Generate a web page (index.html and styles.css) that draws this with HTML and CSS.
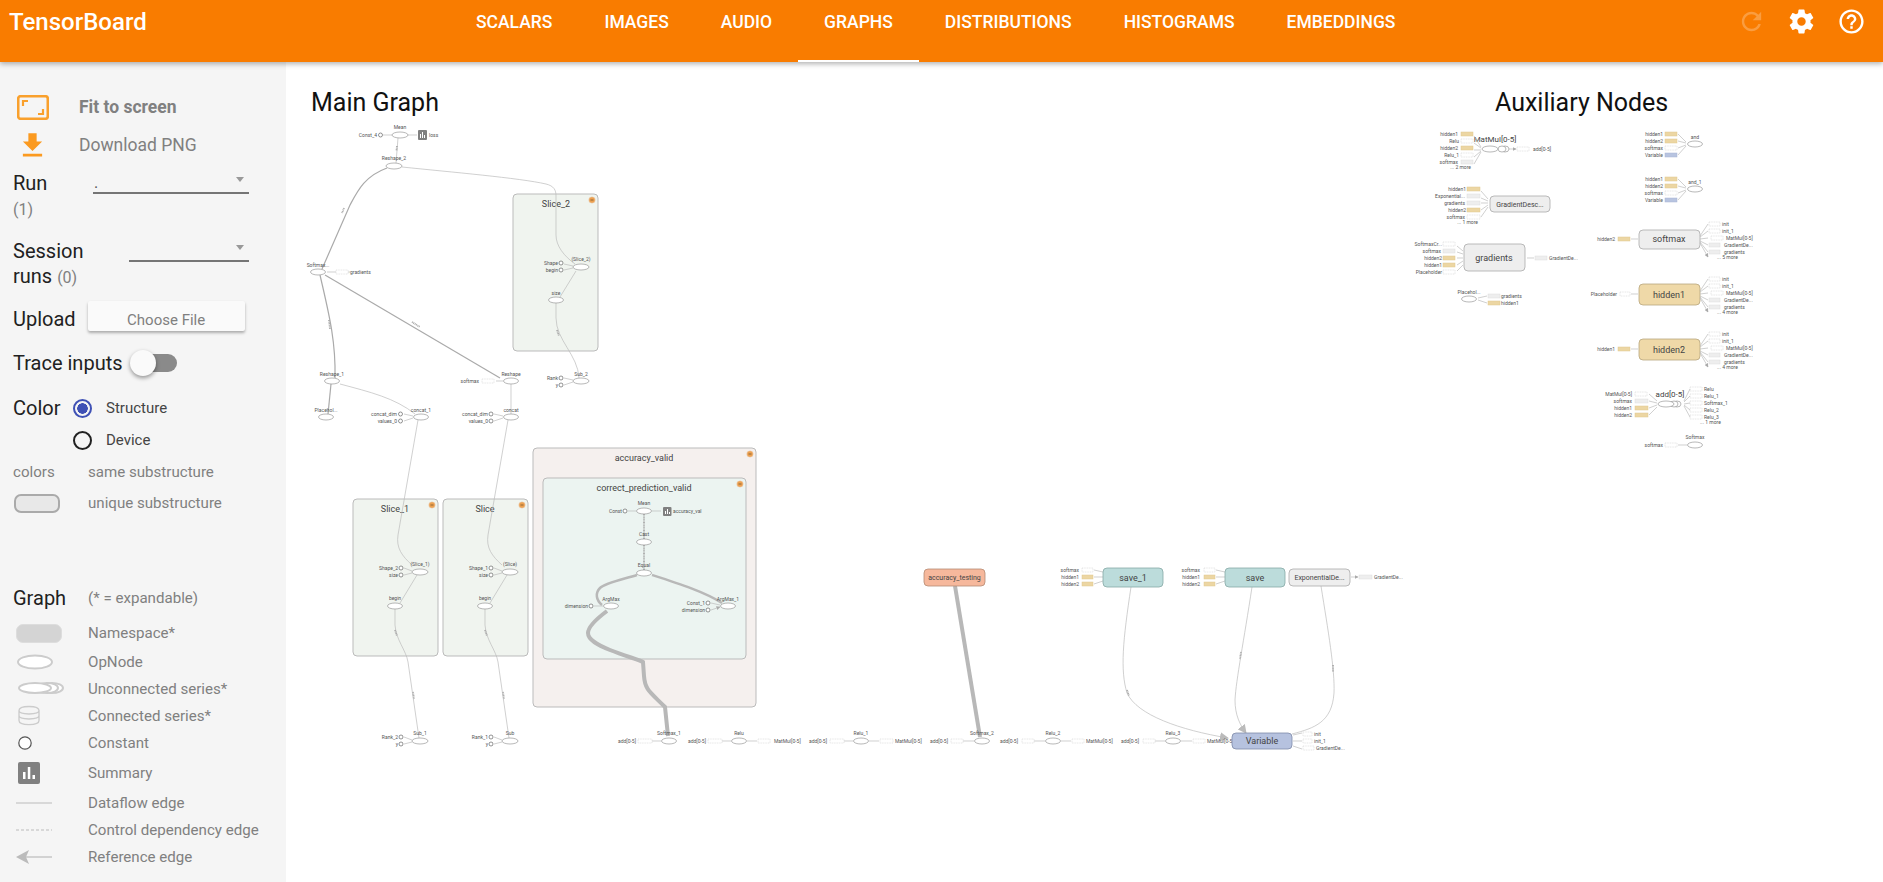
FILE: index.html
```html
<!DOCTYPE html>
<html lang="en">
<head>
<meta charset="utf-8">
<title>TensorBoard</title>
<link rel="stylesheet" href="styles.css">
</head>
<body>
<header class="topbar">
  <div class="brand">TensorBoard</div>
  <nav class="tabs">
    <a class="tab">Scalars</a>
    <a class="tab">Images</a>
    <a class="tab">Audio</a>
    <a class="tab tab-active">Graphs</a>
    <a class="tab">Distributions</a>
    <a class="tab">Histograms</a>
    <a class="tab">Embeddings</a>
  </nav>
  <div class="actions">
    <svg class="act act-off" viewBox="0 0 24 24"><path d="M17.65 6.35C16.2 4.9 14.21 4 12 4c-4.42 0-7.99 3.58-7.99 8s3.57 8 7.99 8c3.73 0 6.84-2.55 7.73-6h-2.08c-.82 2.33-3.04 4-5.65 4-3.31 0-6-2.69-6-6s2.69-6 6-6c1.66 0 3.14.69 4.22 1.78L13 11h7V4l-2.35 2.35z"/></svg>
    <svg class="act" viewBox="0 0 24 24"><path d="M19.43 12.98c.04-.32.07-.64.07-.98s-.03-.66-.07-.98l2.11-1.65c.19-.15.24-.42.12-.64l-2-3.46c-.12-.22-.39-.3-.61-.22l-2.49 1c-.52-.4-1.08-.73-1.69-.98l-.38-2.65C14.46 2.18 14.25 2 14 2h-4c-.25 0-.46.18-.49.42l-.38 2.65c-.61.25-1.17.59-1.69.98l-2.49-1c-.23-.09-.49 0-.61.22l-2 3.46c-.13.22-.07.49.12.64l2.11 1.65c-.04.32-.07.65-.07.98s.03.66.07.98l-2.11 1.65c-.19.15-.24.42-.12.64l2 3.46c.12.22.39.3.61.22l2.49-1c.52.4 1.08.73 1.69.98l.38 2.65c.03.24.24.42.49.42h4c.25 0 .46-.18.49-.42l.38-2.65c.61-.25 1.17-.59 1.69-.98l2.49 1c.23.09.49 0 .61-.22l2-3.46c.12-.22.07-.49-.12-.64l-2.11-1.65zM12 15.5c-1.93 0-3.5-1.57-3.5-3.5s1.57-3.5 3.5-3.5 3.5 1.57 3.5 3.5-1.57 3.5-3.5 3.5z"/></svg>
    <svg class="act" viewBox="0 0 24 24"><path d="M11 18h2v-2h-2v2zm1-16C6.48 2 2 6.48 2 12s4.48 10 10 10 10-4.48 10-10S17.52 2 12 2zm0 18c-4.41 0-8-3.59-8-8s3.59-8 8-8 8 3.59 8 8-3.59 8-8 8zm0-14c-2.21 0-4 1.79-4 4h2c0-1.1.9-2 2-2s2 .9 2 2c0 2-3 1.75-3 5h2c0-2.25 3-2.5 3-5 0-2.21-1.79-4-4-4z"/></svg>
  </div>
</header>
<div class="body">
  <aside class="side">
    <div class="cmd cmd-fit">
      <svg class="cmd-ic" viewBox="0 0 32 25"><rect x="1.2" y="1.2" width="29.6" height="22.6" rx="2.5"/><path class="cmd-c" d="M6 11V6h5M26 14v5h-5"/></svg>
      <span class="cmd-b">Fit to screen</span>
    </div>
    <div class="cmd cmd-dl">
      <svg class="cmd-ic2" viewBox="0 0 24 24"><path d="M19 9h-4V3H9v6H5l7 7 7-7zM5 18v2h14v-2H5z"/></svg>
      <span>Download PNG</span>
    </div>
    <div class="ctl ctl-run">
      <div class="lab">Run<br><span class="cnt">(1)</span></div>
      <div class="sel sel-run"><span class="sel-v">.</span><i class="caret"></i></div>
    </div>
    <div class="ctl ctl-ses">
      <div class="lab">Session<br>runs <span class="cnt">(0)</span></div>
      <div class="sel sel-ses"><i class="caret"></i></div>
    </div>
    <div class="ctl ctl-up">
      <div class="lab">Upload</div>
      <div class="btn">Choose File</div>
    </div>
    <div class="ctl ctl-tr">
      <div class="lab">Trace inputs</div>
      <div class="tog"><i class="tog-th"></i></div>
    </div>
    <div class="ctl ctl-col">
      <div class="lab lab-col">Color</div>
      <div class="rad-list">
        <div class="rad"><i class="rad-i rad-on"></i><span>Structure</span></div>
        <div class="rad"><i class="rad-i"></i><span>Device</span></div>
      </div>
    </div>
    <div class="lg lg-colors">
      <div class="lg-row lg-r1"><span class="lg-k">colors</span><span>same substructure</span></div>
      <div class="lg-row lg-r2"><span class="lg-k"><i class="sw-uniq"></i></span><span>unique substructure</span></div>
    </div>
    <div class="lg lg-graph">
      <div class="lg-row2 lg-h"><span class="lg-k2 lg-title">Graph</span><span>(* = expandable)</span></div>
      <div class="lg-row2 h-ns"><span class="lg-k2"><i class="sw-ns"></i></span><span>Namespace*</span></div>
      <div class="lg-row2"><span class="lg-k2"><svg class="sw" viewBox="0 0 50 20"><ellipse class="sw-op" cx="21" cy="10" rx="17" ry="6.5"/></svg></span><span>OpNode</span></div>
      <div class="lg-row2"><span class="lg-k2"><svg class="sw" viewBox="0 0 50 20"><ellipse class="sw-op" cx="38" cy="9" rx="11" ry="5"/><ellipse class="sw-op" cx="33" cy="9" rx="11" ry="5"/><ellipse class="sw-op" cx="21" cy="9" rx="16" ry="5"/></svg></span><span>Unconnected series*</span></div>
      <div class="lg-row2"><span class="lg-k2"><svg class="sw" viewBox="0 0 50 22"><path class="sw-st" d="M3 5c0-6 22-6 22 0v11c0 6-22 6-22 0zM3 5c0 5 22 5 22 0M3 10.500c0 5 22 5 22 0"/></svg></span><span>Connected series*</span></div>
      <div class="lg-row2"><span class="lg-k2"><svg class="sw" viewBox="0 0 50 20"><circle class="sw-cn" cx="11" cy="10" r="6.200"/></svg></span><span>Constant</span></div>
      <div class="lg-row2 h-sum"><span class="lg-k2"><svg class="sw-s" viewBox="0 0 22 22"><rect class="sw-sb" width="22" height="22" rx="2"/><path class="sw-sw" d="M5 10h2.500v7H5zM9.800 5h2.500v12H9.800zM14.500 13H17v4h-2.500z"/></svg></span><span>Summary</span></div>
      <div class="lg-row2"><span class="lg-k2"><svg class="sw" viewBox="0 0 50 20"><path class="sw-l" d="M2 10h36"/></svg></span><span>Dataflow edge</span></div>
      <div class="lg-row2"><span class="lg-k2"><svg class="sw" viewBox="0 0 50 20"><path class="sw-l sw-d" d="M2 10h36"/></svg></span><span>Control dependency edge</span></div>
      <div class="lg-row2"><span class="lg-k2"><svg class="sw" viewBox="0 0 50 20"><path class="sw-l" d="M12 10h26"/><path class="sw-ar" d="M2 10l13-7-3 7 3 7z"/></svg></span><span>Reference edge</span></div>
    </div>
  </aside>
  <main class="board">
    <svg class="graph" viewBox="286 62 1597 820">
      <defs>
        <marker id="a" markerUnits="userSpaceOnUse" markerWidth="4" markerHeight="4" refX="3.500" refY="2" orient="auto"><path class="ah" d="M0 0l4 2-4 2z"/></marker>
        <marker id="ab" markerUnits="userSpaceOnUse" markerWidth="9" markerHeight="9" refX="8" refY="4.500" orient="auto"><path class="ahb" d="M0 0l9 4.500-9 4.500z"/></marker>
        <g id="fan">
          <path class="e" marker-end="url(#a)" d="M0-3L8-15M0-2L8-8M0 0L8-1M0 2L8 6M0 3L8 13M0 4L8 18"/>
          <rect class="s-d" x="9" y="-17" width="11" height="4"/>
          <rect class="s-d" x="9" y="-10" width="11" height="4"/>
          <rect class="s-d" x="11" y="-3" width="12" height="4"/>
          <rect class="s-g" x="9" y="4" width="11" height="4"/>
          <rect class="s-g" x="9" y="11" width="11" height="4"/>
          <text class="t" x="22" y="-13.500">init</text>
          <text class="t" x="22" y="-6.500">init_1</text>
          <text class="t" x="26" y="0.500">MatMul[0-5]</text>
          <text class="t" x="24" y="7.500">GradientDe...</text>
          <text class="t" x="24" y="14.500">gradients</text>
        </g>
      </defs>

      <text class="h1" x="311" y="111">Main Graph</text>
      <text class="h1" x="1495" y="111">Auxiliary Nodes</text>

      <!-- groups -->
      <rect class="grp" x="513" y="194" width="85" height="157" rx="4"/>
      <rect class="grp" x="353" y="499" width="85" height="157" rx="4"/>
      <rect class="grp" x="443" y="499" width="85" height="157" rx="4"/>
      <rect class="grp-o" x="533" y="448" width="223" height="259" rx="4"/>
      <rect class="grp-i" x="543" y="478" width="203" height="181" rx="4"/>
      <g class="tm tg">
        <text x="556" y="207">Slice_2</text>
        <text x="395" y="512">Slice_1</text>
        <text x="485" y="512">Slice</text>
        <text x="644" y="461">accuracy_valid</text>
        <text x="644" y="491">correct_prediction_valid</text>
      </g>
      <g class="mini">
        <circle cx="592" cy="200" r="3.300"/><circle cx="432" cy="505" r="3.300"/><circle cx="522" cy="505" r="3.300"/><circle cx="750" cy="454" r="3.300"/><circle cx="740" cy="484" r="3.300"/>
      </g>
      <path class="mini-l" d="M590.500 200h3M430.500 505h3M520.500 505h3M748.500 454h3M738.500 484h3"/>

      <!-- main edges -->
      <path class="e" d="M402 167C450 172 520 178 546 184C554 186 556 190 556 196V235C556 246 564 256 575 264"/>
      <path class="e2" d="M387 168C365 176 358 190 350 205L322 269"/>
      <path class="e2" d="M320 275C328 310 336 340 335 378"/>
      <path class="e2" d="M325 275L500 378"/>
      <path class="e" d="M398 138L396 163"/>
      <path class="e2" d="M331 384L328 414"/>
      <path class="e" d="M340 384C370 392 395 398 415 414"/>
      <path class="e" d="M511 384V414"/>
      <path class="e" d="M576 271L560 297"/>
      <path class="e" d="M556 303V318C556 340 578 355 579 378"/>
      <path class="e" d="M418 420L398 535C396 548 402 556 412 565"/>
      <path class="e" d="M508 420L488 535C486 548 492 556 502 565"/>
      <path class="e" d="M417 575L400 603"/>
      <path class="e" d="M507 575L490 603"/>
      <path class="e" d="M395 609V625C396 640 406 650 408 662L419 738"/>
      <path class="e" d="M485 609V625C486 640 496 650 498 662L509 738"/>
      <path class="e3" d="M644 514V539M644 545V570"/>
      <path class="e4" d="M637 575C620 580 605 583 600 588C595 593 596 600 602 605"/>
      <path class="e4" d="M652 575C680 584 705 592 722 603"/>
      <path class="e5" d="M607 611C595 620 588 628 588 633C588 640 598 645 610 650C625 656 640 660 643 662L644 676C645 690 650 692 665 707L668 736"/>
      <path class="e5" d="M955 586L980 737"/>
      <path class="e" d="M1131 587C1123 640 1120 670 1127 693C1137 715 1180 730 1228 738" marker-end="url(#ab)"/>
      <path class="e" d="M1252 587C1244 640 1236 680 1235 700C1235 715 1240 725 1246 733" marker-end="url(#ab)"/>
      <path class="e" d="M1321 586C1328 630 1335 670 1334 693C1332 722 1315 728 1292 734"/>
      <path class="e3" d="M344 208l-2 5M329 320l1 9M412 322l8 5M397 146l-.5 5M557 330l2 6M395 630l2 6M485 630l2 6M413 692l1 7M503 692l1 7M1127 690l2 6M1241 652l-1 7M1333 665v7"/>

      <!-- small arrows -->
      <path class="e" marker-end="url(#a)" d="M383 135H392M408 135H417M350 272H327M496 381H503M564 264L573 266M564 270L573 268M404 414L413 416M404 421L413 418M494 414L503 416M494 421L503 418M564 378L573 380M564 385L573 382M404 568L412 571M404 575L412 573M494 568L502 571M494 575L502 573M404 737L412 740M404 744L412 742M494 737L502 740M494 744L502 742M628 511H636M652 511H661M594 606H603M711 603L720 605M711 610L720 607"/>
      <path class="e" marker-end="url(#a)" d="M652 741H661M722 741H731M747 741H757M844 741H853M869 741H879M963 741H974M1034 741H1045M1061 741H1071M1155 741H1165M1181 741H1192M1094 570L1103 572M1094 577H1103M1094 584L1103 581M1216 570L1225 572M1216 577H1225M1216 584L1225 581M1351 577H1358"/>
      <path class="e" marker-end="url(#a)" d="M1293 735L1302 733M1293 741H1302M1293 746L1302 749M1496 149H1516"/>

      <!-- ops -->
      <g class="op">
        <ellipse cx="400" cy="135" rx="8" ry="3"/><ellipse cx="394" cy="166" rx="8" ry="3"/><ellipse cx="318" cy="272" rx="7.500" ry="3"/>
        <ellipse cx="581" cy="267" rx="8" ry="3"/><ellipse cx="556" cy="300" rx="7.500" ry="3"/><ellipse cx="581" cy="381" rx="8" ry="3"/>
        <ellipse cx="332" cy="381" rx="7.500" ry="3"/><ellipse cx="326" cy="417" rx="7.500" ry="3"/><ellipse cx="421" cy="417" rx="7.500" ry="3"/>
        <ellipse cx="511" cy="381" rx="7.500" ry="3"/><ellipse cx="511" cy="417" rx="7.500" ry="3"/>
        <ellipse cx="420" cy="572" rx="8" ry="3"/><ellipse cx="395" cy="606" rx="7.500" ry="3"/><ellipse cx="420" cy="741" rx="8" ry="3"/>
        <ellipse cx="510" cy="572" rx="8" ry="3"/><ellipse cx="485" cy="606" rx="7.500" ry="3"/><ellipse cx="510" cy="741" rx="8" ry="3"/>
        <ellipse cx="644" cy="511" rx="7.500" ry="3"/><ellipse cx="644" cy="542" rx="7.500" ry="3"/><ellipse cx="644" cy="573" rx="7.500" ry="3"/>
        <ellipse cx="611" cy="606" rx="7.500" ry="3"/><ellipse cx="728" cy="606" rx="7.500" ry="3"/>
        <ellipse cx="669" cy="741" rx="7.500" ry="3"/><ellipse cx="739" cy="741" rx="7.500" ry="3"/><ellipse cx="861" cy="741" rx="7.500" ry="3"/>
        <ellipse cx="982" cy="741" rx="7.500" ry="3"/><ellipse cx="1053" cy="741" rx="7.500" ry="3"/><ellipse cx="1173" cy="741" rx="7.500" ry="3"/>
        <ellipse cx="1695" cy="144" rx="7.500" ry="3"/><ellipse cx="1695" cy="189" rx="7.500" ry="3"/><ellipse cx="1695" cy="445" rx="7.500" ry="3"/>
        <ellipse cx="1469" cy="299" rx="7.500" ry="3"/>
        <ellipse cx="1505" cy="149" rx="4" ry="3"/><ellipse cx="1502" cy="149" rx="4" ry="3"/><ellipse cx="1490" cy="149" rx="8" ry="3"/>
        <ellipse cx="1677" cy="404" rx="4" ry="3"/><ellipse cx="1674" cy="404" rx="4" ry="3"/><ellipse cx="1666" cy="404" rx="8" ry="3"/>
      </g>
      <g class="cn">
        <circle cx="380.500" cy="135" r="2"/><circle cx="561" cy="263" r="2"/><circle cx="561" cy="270" r="2"/>
        <circle cx="561" cy="378" r="2"/><circle cx="561" cy="385" r="2"/><circle cx="400.500" cy="414" r="2"/><circle cx="400.500" cy="421" r="2"/>
        <circle cx="491" cy="414" r="2"/><circle cx="491" cy="421" r="2"/>
        <circle cx="401" cy="568" r="2"/><circle cx="401" cy="575" r="2"/><circle cx="491" cy="568" r="2"/><circle cx="491" cy="575" r="2"/>
        <circle cx="401" cy="737" r="2"/><circle cx="401" cy="744" r="2"/><circle cx="491" cy="737" r="2"/><circle cx="491" cy="744" r="2"/>
        <circle cx="625" cy="511" r="2"/><circle cx="591" cy="606" r="2"/><circle cx="708" cy="603" r="2"/><circle cx="708" cy="610" r="2"/>
      </g>
      <rect class="sum" x="418" y="130" width="9" height="10" rx="1"/>
      <path class="sum-b" d="M420 134h1v4h-1zM422 132h1v6h-1zM424 135h1v3h-1z"/>
      <rect class="sum" x="663" y="507" width="8.500" height="9" rx="1"/>
      <path class="sum-b" d="M665 511h1v3h-1zM667 509h1v5h-1zM669 512h1v2h-1z"/>

      <!-- main labels -->
      <g class="t tm">
        <text x="400" y="129">Mean</text><text x="394" y="160">Reshape_2</text><text x="318" y="267">Softmax...</text>
        <text x="581" y="261">(Slice_2)</text><text x="556" y="295">size</text><text x="581" y="376">Sub_2</text>
        <text x="332" y="376">Reshape_1</text><text x="326" y="412">Placehol...</text><text x="421" y="412">concat_1</text>
        <text x="511" y="376">Reshape</text><text x="511" y="412">concat</text>
        <text x="420" y="566">(Slice_1)</text><text x="395" y="600">begin</text><text x="420" y="735">Sub_1</text>
        <text x="510" y="566">(Slice)</text><text x="485" y="600">begin</text><text x="510" y="735">Sub</text>
        <text x="644" y="505">Mean</text><text x="644" y="536">Cast</text><text x="644" y="567">Equal</text>
        <text x="611" y="601">ArgMax</text><text x="728" y="601">ArgMax_1</text>
        <text x="669" y="735">Softmax_1</text><text x="739" y="735">Relu</text><text x="861" y="735">Relu_1</text>
        <text x="982" y="735">Softmax_2</text><text x="1053" y="735">Relu_2</text><text x="1173" y="735">Relu_3</text>
        <text x="1695" y="139">and</text><text x="1695" y="184">and_1</text><text x="1695" y="439">Softmax</text>
        <text x="1469" y="294">Placehol...</text>
      </g>
      <g class="t te">
        <text x="377" y="137">Const_4</text><text x="558" y="265">Shape</text><text x="558" y="272">begin</text>
        <text x="558" y="380">Rank</text><text x="558" y="387">y</text>
        <text x="397" y="416">concat_dim</text><text x="397" y="423">values_0</text>
        <text x="488" y="416">concat_dim</text><text x="488" y="423">values_0</text>
        <text x="479" y="383">softmax</text>
        <text x="398" y="570">Shape_2</text><text x="398" y="577">size</text><text x="488" y="570">Shape_1</text><text x="488" y="577">size</text>
        <text x="398" y="739">Rank_2</text><text x="398" y="746">y</text><text x="488" y="739">Rank_1</text><text x="488" y="746">y</text>
        <text x="622" y="513">Const</text><text x="588" y="608">dimension</text><text x="705" y="605">Const_1</text><text x="705" y="612">dimension</text>
        <text x="636" y="743">add[0-5]</text><text x="706" y="743">add[0-5]</text><text x="827" y="743">add[0-5]</text>
        <text x="948" y="743">add[0-5]</text><text x="1018" y="743">add[0-5]</text><text x="1139" y="743">add[0-5]</text>
      </g>
      <g class="t">
        <text x="429" y="137">loss</text><text x="350" y="274">gradients</text><text x="673" y="513">accuracy_val</text>
        <text x="774" y="743">MatMul[0-5]</text><text x="895" y="743">MatMul[0-5]</text><text x="1086" y="743">MatMul[0-5]</text><text x="1207" y="743">MatMul[0-5]</text>
        <text x="1314" y="736">init</text><text x="1314" y="743">init_1</text><text x="1316" y="750">GradientDe...</text>
        <text x="1374" y="579">GradientDe...</text>
      </g>
      <g class="s-d">
        <rect x="336" y="270" width="12" height="4"/><rect x="482" y="379" width="12" height="4"/>
        <rect x="638" y="739" width="14" height="4"/><rect x="708" y="739" width="14" height="4"/><rect x="758" y="739" width="12" height="4"/>
        <rect x="830" y="739" width="14" height="4"/><rect x="880" y="739" width="13" height="4"/><rect x="951" y="739" width="12" height="4"/>
        <rect x="1022" y="739" width="12" height="4"/><rect x="1072" y="739" width="12" height="4"/><rect x="1143" y="739" width="12" height="4"/><rect x="1193" y="739" width="12" height="4"/>
        <rect x="1303" y="732" width="9" height="4"/><rect x="1303" y="739" width="9" height="4"/><rect x="1303" y="746" width="11" height="4"/>
        <rect x="1082" y="568" width="11" height="4"/><rect x="1204" y="568" width="11" height="4"/>
      </g>
      <rect class="s-g" x="1359" y="575" width="13" height="4"/>
      <g class="s-t">
        <rect x="1082" y="575" width="11" height="4"/><rect x="1082" y="582" width="11" height="4"/><rect x="1204" y="575" width="11" height="4"/><rect x="1204" y="582" width="11" height="4"/>
      </g>

      <!-- big nodes -->
      <rect class="n-o" x="924" y="569" width="61" height="17" rx="4"/>
      <rect class="n-c" x="1103" y="568" width="60" height="19" rx="4"/>
      <rect class="n-c" x="1225" y="568" width="60" height="19" rx="4"/>
      <rect class="n-g" x="1289" y="569" width="61" height="17" rx="4"/>
      <rect class="n-b" x="1232" y="733" width="60" height="16" rx="4"/>
      <rect class="n-g" x="1490" y="196" width="60" height="16" rx="4"/>
      <rect class="n-g" x="1464" y="244" width="61" height="27" rx="4"/>
      <rect class="n-g" x="1639" y="230" width="61" height="19" rx="4"/>
      <rect class="n-t" x="1639" y="284" width="61" height="21" rx="4"/>
      <rect class="n-t" x="1639" y="339" width="61" height="21" rx="4"/>
      <g class="tm t8">
        <text x="954.500" y="580">accuracy_testing</text><text x="1319.500" y="580">ExponentialDe...</text><text x="1520" y="207">GradientDesc...</text>
      </g>
      <g class="tm t10">
        <text x="1133" y="581">save_1</text><text x="1255" y="581">save</text><text x="1262" y="744">Variable</text>
        <text x="1494" y="261">gradients</text><text x="1669" y="242">softmax</text><text x="1669" y="298">hidden1</text><text x="1669" y="353">hidden2</text>
        <text x="1495" y="142" class="t9">MatMul[0-5]</text><text x="1670" y="397" class="t9">add[0-5]</text>
      </g>

      <!-- save inputs -->
      <g class="t te">
        <text x="1079" y="572">softmax</text><text x="1079" y="579">hidden1</text><text x="1079" y="586">hidden2</text>
        <text x="1200" y="572">softmax</text><text x="1200" y="579">hidden1</text><text x="1200" y="586">hidden2</text>
      </g>

      <!-- auxiliary -->
      <path class="e" d="M1474 136L1481 147M1474 143L1481 148M1474 150H1481M1474 157L1481 151M1474 164L1481 152"/>
      <g class="t te">
        <text x="1458" y="136">hidden1</text><text x="1459" y="143">Relu</text><text x="1458" y="150">hidden2</text><text x="1459" y="157">Relu_1</text><text x="1458" y="164">softmax</text><text x="1471" y="169">... 2 more</text>
        <text x="1466" y="191">hidden1</text><text x="1465" y="198">Exponential...</text><text x="1465" y="205">gradients</text><text x="1466" y="212">hidden2</text><text x="1465" y="219">softmax</text><text x="1478" y="224">... 1 more</text>
        <text x="1442" y="246">SoftmaxCr...</text><text x="1441" y="253">softmax</text><text x="1442" y="260">hidden2</text><text x="1442" y="267">hidden1</text><text x="1442" y="274">Placeholder</text>
        <text x="1663" y="136">hidden1</text><text x="1663" y="143">hidden2</text><text x="1663" y="150">softmax</text><text x="1663" y="157">Variable</text>
        <text x="1663" y="181">hidden1</text><text x="1663" y="188">hidden2</text><text x="1663" y="195">softmax</text><text x="1663" y="202">Variable</text>
        <text x="1615" y="241">hidden2</text><text x="1617" y="296">Placeholder</text><text x="1615" y="351">hidden1</text>
        <text x="1632" y="396">MatMul[0-5]</text><text x="1632" y="403">softmax</text><text x="1632" y="410">hidden1</text><text x="1632" y="417">hidden2</text>
        <text x="1663" y="447">softmax</text>
      </g>
      <g class="t">
        <text x="1533" y="151">add[0-5]</text><text x="1549" y="260">GradientDe...</text><text x="1501" y="298">gradients</text><text x="1501" y="305">hidden1</text>
        <text x="1704" y="391">Relu</text><text x="1704" y="398">Relu_1</text><text x="1704" y="405">Softmax_1</text><text x="1704" y="412">Relu_2</text><text x="1704" y="419">Relu_3</text>
        <text x="1717" y="259">... 5 more</text><text x="1717" y="314">... 4 more</text><text x="1717" y="369">... 4 more</text><text x="1700" y="424">... 1 more</text>
      </g>
      <g class="s-t">
        <rect x="1461" y="132" width="12" height="4"/><rect x="1461" y="146" width="12" height="4"/>
        <rect x="1467" y="187" width="13" height="4"/><rect x="1467" y="208" width="13" height="4"/>
        <rect x="1443" y="256" width="12" height="4"/><rect x="1443" y="263" width="12" height="4"/>
        <rect x="1488" y="301" width="12" height="4"/>
        <rect x="1665" y="132" width="12" height="4"/><rect x="1665" y="139" width="12" height="4"/>
        <rect x="1665" y="177" width="12" height="4"/><rect x="1665" y="184" width="12" height="4"/>
        <rect x="1618" y="237" width="12" height="4"/><rect x="1618" y="347" width="12" height="4"/>
        <rect x="1635" y="406" width="13" height="4"/><rect x="1635" y="413" width="13" height="4"/>
      </g>
      <g class="s-g">
        <rect x="1461" y="160" width="12" height="4"/>
        <rect x="1467" y="194" width="13" height="4"/><rect x="1467" y="201" width="13" height="4"/>
        <rect x="1443" y="249" width="12" height="4"/><rect x="1535" y="256" width="12" height="4"/>
        <rect x="1488" y="294" width="12" height="4"/><rect x="1635" y="399" width="13" height="4"/>
      </g>
      <g class="s-d">
        <rect x="1461" y="139" width="12" height="4"/><rect x="1461" y="153" width="12" height="4"/><rect x="1517" y="147" width="12" height="4"/>
        <rect x="1467" y="215" width="13" height="4"/><rect x="1443" y="242" width="12" height="4"/><rect x="1443" y="270" width="12" height="4"/>
        <rect x="1665" y="146" width="12" height="4"/><rect x="1665" y="191" width="12" height="4"/><rect x="1665" y="443" width="12" height="4"/>
        <rect x="1620" y="292" width="10" height="4"/><rect x="1635" y="392" width="12" height="4"/>
        <rect x="1690" y="387" width="12" height="4"/><rect x="1690" y="394" width="12" height="4"/><rect x="1690" y="401" width="12" height="4"/><rect x="1690" y="408" width="12" height="4"/><rect x="1690" y="415" width="12" height="4"/>
      </g>
      <g class="s-b"><rect x="1665" y="153" width="12" height="4"/><rect x="1665" y="198" width="12" height="4"/></g>
      <path class="e" d="M1481 191L1488 199M1481 198L1488 201M1481 203H1488M1481 210L1488 205M1481 217L1488 207M1457 246L1463 251M1457 252L1463 254M1457 258H1463M1457 265L1463 261M1457 271L1463 265M1527 258H1534M1478 298L1487 296M1478 300L1487 303M1678 134L1686 142M1678 141L1686 143M1678 148L1686 145M1678 155L1686 146M1678 179L1686 187M1678 186L1686 188M1678 193L1686 190M1678 200L1686 191M1631 239H1638M1631 294H1638M1631 349H1638M1649 394L1657 401M1649 401L1657 403M1649 408L1657 405M1649 415L1657 407M1678 445H1687M1684 401L1690 389M1684 402L1690 396M1684 404L1690 403M1684 405L1690 410M1684 406L1690 417"/>
      <use href="#fan" x="1700" y="239"/>
      <use href="#fan" x="1700" y="294"/>
      <use href="#fan" x="1700" y="349"/>
    </svg>
  </main>
</div>
</body>
</html>
```
FILE: styles.css
```css
* { box-sizing: border-box; }
html, body { margin: 0; height: 100%; overflow: hidden; }
body { font-family: Roboto, "Liberation Sans", sans-serif; color: #000; background: #fff; display: flex; flex-direction: column; }

.topbar { flex: 0 0 62px; height: 62px; background: #f97c00; color: #fff; display: flex; align-items: flex-start; position: relative; z-index: 2; box-shadow: 0 2px 5px rgba(0,0,0,.3); }
.brand { width: 476px; padding: 7px 0 0 9px; font-size: 24px; line-height: 30px; font-weight: 500; margin-right: -26px; }
.tabs { display: flex; }
.tab { height: 62px; padding: 12px 26px 0; font-size: 17.500px; line-height: 20px; font-weight: 500; text-transform: uppercase; border-bottom: 2px solid transparent; }
.tab-active { border-bottom-color: #fff; }
.actions { margin-left: auto; display: flex; gap: 21px; padding: 7px 17px 0 0; }
.act { width: 29px; height: 29px; fill: #fff; }
.act-off { opacity: .25; }

.body { flex: 1; display: flex; min-height: 0; }
.side { flex: 0 0 286px; background: #f5f5f5; padding: 29px 0 0 13px; font-size: 15.100px; color: #808080; overflow: hidden; }
.board { flex: 1; min-width: 0; }
.graph { display: block; width: 100%; height: 100%; }

.cmd { display: flex; align-items: center; height: 32px; font-size: 17.500px; }
.cmd > span { margin-left: 32px; }
.cmd-b { font-weight: 700; }
.cmd-ic { width: 32px; height: 25px; margin-left: 4px; margin-right: -2px; flex: none; }
.cmd-ic rect { fill: none; stroke: #f9a02c; stroke-width: 2.600; }
.cmd-c { fill: none; stroke: #f9a02c; stroke-width: 2.200; }
.cmd-ic2 { width: 33px; height: 33px; fill: #fb9a20; margin-right: -1px; flex: none; }
.cmd-dl { margin-top: 6px; margin-left: 3px; height: 32px; }
.cmd-dl > span { margin-left: 31px; }

.ctl { display: flex; }
.lab { font-size: 20px; line-height: 25px; color: #212121; }
.cnt { font-size: 16px; color: #808080; }
.sel { position: relative; border-bottom: 2px solid #757575; height: 24px; font-size: 16px; color: #555; margin-left: auto; margin-right: 37px; }
.sel-run { width: 156px; }
.sel-ses { width: 120px; }
.sel-v { padding-left: 1px; line-height: 26px; }
.caret { position: absolute; right: 5px; top: 7px; border: 4px solid transparent; border-top: 5px solid #999; border-bottom: 0; }
.ctl-run { margin-top: 10px; height: 54px; }
.ctl-run .sel { margin-top: -1px; }
.ctl-ses { margin-top: 14px; height: 60px; }
.ctl-ses .sel { margin-top: -1px; }
.ctl-up { margin-top: 4px; height: 30px; align-items: center; }
.ctl-up .lab { margin-top: 2px; }
.btn { margin: -4px 0 0 12px; width: 157px; height: 30px; background: #fafafa; border-radius: 2px; box-shadow: 0 2px 3px rgba(0,0,0,.3); text-align: center; line-height: 38px; color: #808080; font-size: 15px; }
.ctl-tr { margin-top: 15px; height: 30px; align-items: center; }
.tog { position: relative; margin-left: 7px; width: 47px; height: 18px; }
.tog::before { content: ""; position: absolute; left: 14px; right: 0; top: 0; bottom: 0; background: #8a8a8a; border-radius: 9px; }
.tog-th { position: absolute; left: 0; top: -4px; width: 26px; height: 26px; border-radius: 50%; background: #fafafa; box-shadow: 0 2px 4px rgba(0,0,0,.4); }
.ctl-col { margin-top: 15px; }
.lab-col { line-height: 30px; width: 60px; }
.rad-list { display: flex; flex-direction: column; gap: 2px; }
.rad { display: flex; align-items: center; height: 30px; font-size: 15px; color: #444; }
.rad span { margin-left: 14px; }
.rad-i { width: 19px; height: 19px; border-radius: 50%; border: 2px solid #212121; flex: none; }
.rad-on { border-color: #3f51b5; background: radial-gradient(circle, #3f51b5 0 5px, transparent 5.500px); }

.lg-row { display: flex; align-items: center; }
.lg-k { width: 75px; flex: none; }
.lg-colors { margin-top: 5px; }
.lg-r1 { height: 24px; }
.lg-r2 { height: 30px; margin-top: 4px; }
.sw-uniq { display: block; width: 46px; height: 19px; margin-left: 1px; border: 2.500px solid #aaa; border-radius: 7px; background: #e8e8e8; }

.lg-graph { margin-top: 65px; }
.lg-row2 { display: flex; align-items: center; height: 27px; }
.lg-k2 { width: 75px; flex: none; display: flex; align-items: center; }
.lg-title { font-size: 20px; color: #212121; }
.lg-h { height: 30px; }
.h-ns { margin-top: 5px; height: 30px; }
.h-sum { height: 33px; }
.sw-ns { display: block; width: 46px; height: 19px; margin-left: 3px; background: #d4d4d4; border: 1px solid #ddd; border-radius: 7px; }
.sw { width: 50px; height: 20px; margin-left: 1px; overflow: visible; }
.sw-s { width: 22px; height: 22px; margin-left: 5px; }
.sw-op { fill: #fff; stroke: #ccc; stroke-width: 2; }
.sw-st { fill: none; stroke: #ccc; stroke-width: 1.500; }
.sw-cn { fill: #fff; stroke: #555; stroke-width: 1.200; }
.sw-sb { fill: #808080; }
.sw-sw { fill: #fff; }
.sw-l { stroke: #bbb; stroke-width: 1.200; fill: none; }
.sw-d { stroke-dasharray: 3 2; }
.sw-ar { fill: #bbb; }

.h1 { font-size: 25px; fill: #111; font-family: Roboto, sans-serif; }
.t { font-size: 5px; fill: #555; }
.te { text-anchor: end; }
.tm { text-anchor: middle; }
.tg { font-size: 9px; fill: #444; }
.t8 { font-size: 7px; fill: #444; }
.t10 { font-size: 9px; fill: #444; }
.t9 { font-size: 8px; }
.grp { fill: #f0f4ef; stroke: #bbb; stroke-width: 1; }
.grp-o { fill: #f5f0ee; stroke: #bbb; stroke-width: 1; }
.grp-i { fill: #ecf4f1; stroke: #bbb; stroke-width: 1; }
.mini { fill: #eda050; stroke: #e8e8e8; stroke-width: .5; }
.mini-l { stroke: #7a5a30; stroke-width: .8; fill: none; }
.e { fill: none; stroke: #bbb; stroke-width: .7; }
.e2 { fill: none; stroke: #aaa; stroke-width: 1.200; }
.e3 { fill: none; stroke: #aaa; stroke-width: 1.800; stroke-dasharray: 1 .6; }
.e4 { fill: none; stroke: #b8b8b8; stroke-width: 2.500; }
.e5 { fill: none; stroke: #b8b8b8; stroke-width: 4; }
.ah { fill: #aaa; }
.ahb { fill: #bbb; }
.op ellipse { fill: #fff; stroke: #999; stroke-width: .7; }
.cn circle { fill: #fff; stroke: #666; stroke-width: .7; }
.sum { fill: #808080; }
.sum-b { fill: #fff; }
.s-d rect, rect.s-d { fill: #fff; stroke: #d4d4d4; stroke-width: .6; stroke-dasharray: 1 .7; }
.s-g rect, rect.s-g { fill: #eee; stroke: #ddd; stroke-width: .5; }
.s-t rect { fill: #ecd6a3; stroke: #e0c88e; stroke-width: .5; }
.s-b rect { fill: #b8c4e0; stroke: #a8b4d4; stroke-width: .5; }
.n-o { fill: #f6b89c; stroke: #b58a74; stroke-width: .8; }
.n-c { fill: #bcdcdb; stroke: #86a8a6; stroke-width: .8; }
.n-g { fill: #eee; stroke: #aaa; stroke-width: .8; }
.n-b { fill: #b6c2df; stroke: #7f8aa8; stroke-width: .8; }
.n-t { fill: #efd9a8; stroke: #b8a67e; stroke-width: .8; }
```
